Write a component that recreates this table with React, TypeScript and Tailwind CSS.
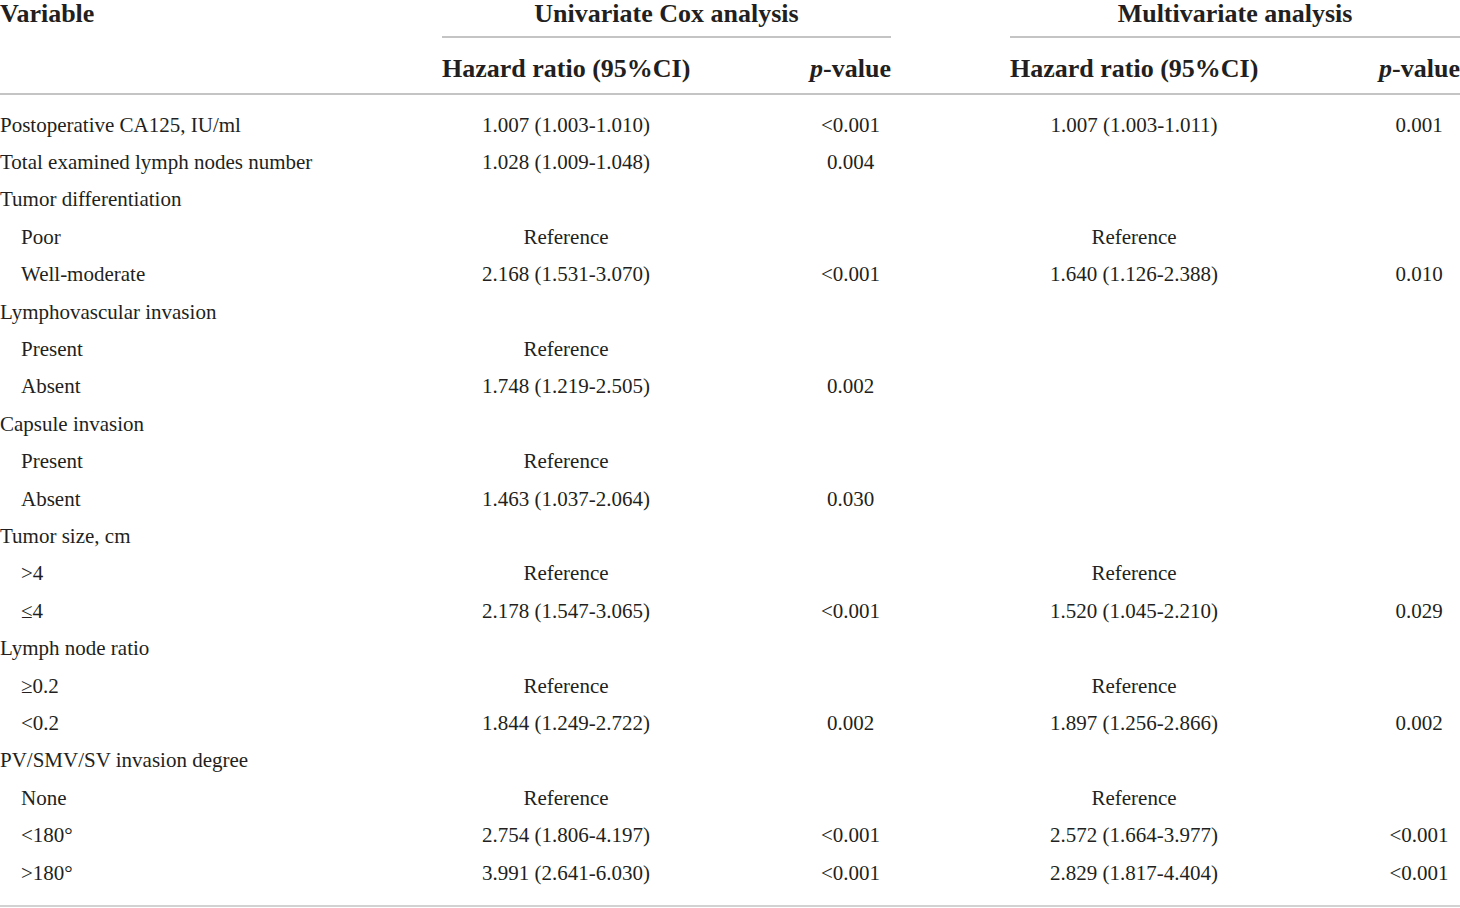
const COLS = "grid grid-cols-[442px_248px_120px_81px_119px_248px_120px_82px]";

type Row = {
  label: string;
  sub?: boolean;
  uhr?: string;
  up?: string;
  mhr?: string;
  mp?: string;
};

const ROWS: Row[] = [
  { label: "Postoperative CA125, IU/ml", uhr: "1.007 (1.003-1.010)", up: "<0.001", mhr: "1.007 (1.003-1.011)", mp: "0.001" },
  { label: "Total examined lymph nodes number", uhr: "1.028 (1.009-1.048)", up: "0.004" },
  { label: "Tumor differentiation" },
  { label: "Poor", sub: true, uhr: "Reference", mhr: "Reference" },
  { label: "Well-moderate", sub: true, uhr: "2.168 (1.531-3.070)", up: "<0.001", mhr: "1.640 (1.126-2.388)", mp: "0.010" },
  { label: "Lymphovascular invasion" },
  { label: "Present", sub: true, uhr: "Reference" },
  { label: "Absent", sub: true, uhr: "1.748 (1.219-2.505)", up: "0.002" },
  { label: "Capsule invasion" },
  { label: "Present", sub: true, uhr: "Reference" },
  { label: "Absent", sub: true, uhr: "1.463 (1.037-2.064)", up: "0.030" },
  { label: "Tumor size, cm" },
  { label: ">4", sub: true, uhr: "Reference", mhr: "Reference" },
  { label: "≤4", sub: true, uhr: "2.178 (1.547-3.065)", up: "<0.001", mhr: "1.520 (1.045-2.210)", mp: "0.029" },
  { label: "Lymph node ratio" },
  { label: "≥0.2", sub: true, uhr: "Reference", mhr: "Reference" },
  { label: "<0.2", sub: true, uhr: "1.844 (1.249-2.722)", up: "0.002", mhr: "1.897 (1.256-2.866)", mp: "0.002" },
  { label: "PV/SMV/SV invasion degree" },
  { label: "None", sub: true, uhr: "Reference", mhr: "Reference" },
  { label: "<180°", sub: true, uhr: "2.754 (1.806-4.197)", up: "<0.001", mhr: "2.572 (1.664-3.977)", mp: "<0.001" },
  { label: ">180°", sub: true, uhr: "3.991 (2.641-6.030)", up: "<0.001", mhr: "2.829 (1.817-4.404)", mp: "<0.001" },
];

function PValue() {
  return (
    <>
      <i>p</i>-value
    </>
  );
}

export default function App() {
  return (
    <div className="w-[1460px] h-[908px] overflow-hidden bg-white font-['Liberation_Serif',serif] text-[#231f20]">
      {/* header */}
      <div className={`${COLS} text-[26px] font-bold leading-[26px]`}>
        <div className="h-[38px] pt-[1px] whitespace-nowrap">Variable</div>
        <div className="col-span-3 h-[38px] pt-[1px] text-center whitespace-nowrap border-b-2 border-[#c4c4c4]">
          Univariate Cox analysis
        </div>
        <div />
        <div className="col-span-3 h-[38px] pt-[1px] text-center whitespace-nowrap border-b-2 border-[#c4c4c4]">
          Multivariate analysis
        </div>

        <div className="h-[55px]" />
        <div className="h-[55px] pt-[18px] text-center whitespace-nowrap">Hazard ratio (95%CI)</div>
        <div />
        <div className="h-[55px] pt-[18px] text-right whitespace-nowrap -ml-4">
          <PValue />
        </div>
        <div />
        <div className="h-[55px] pt-[18px] text-center whitespace-nowrap">Hazard ratio (95%CI)</div>
        <div />
        <div className="h-[55px] pt-[18px] text-right whitespace-nowrap -ml-4">
          <PValue />
        </div>
      </div>
      <div className="h-[2px] bg-[#c4c4c4]" />

      {/* body */}
      <div className="pt-[11px] text-[21px] leading-[24px]">
        {ROWS.map((r, i) => (
          <div key={i} className={`${COLS} h-[37.4px] items-center whitespace-nowrap`}>
            <div className={r.sub ? "pl-[21px]" : ""}>{r.label}</div>
            <div className="text-center">{r.uhr}</div>
            <div />
            <div className="text-center">{r.up}</div>
            <div />
            <div className="text-center">{r.mhr}</div>
            <div />
            <div className="text-center">{r.mp}</div>
          </div>
        ))}
      </div>
      <div className="mt-[14px] h-[2px] bg-[#d2d2d2]" />
    </div>
  );
}
